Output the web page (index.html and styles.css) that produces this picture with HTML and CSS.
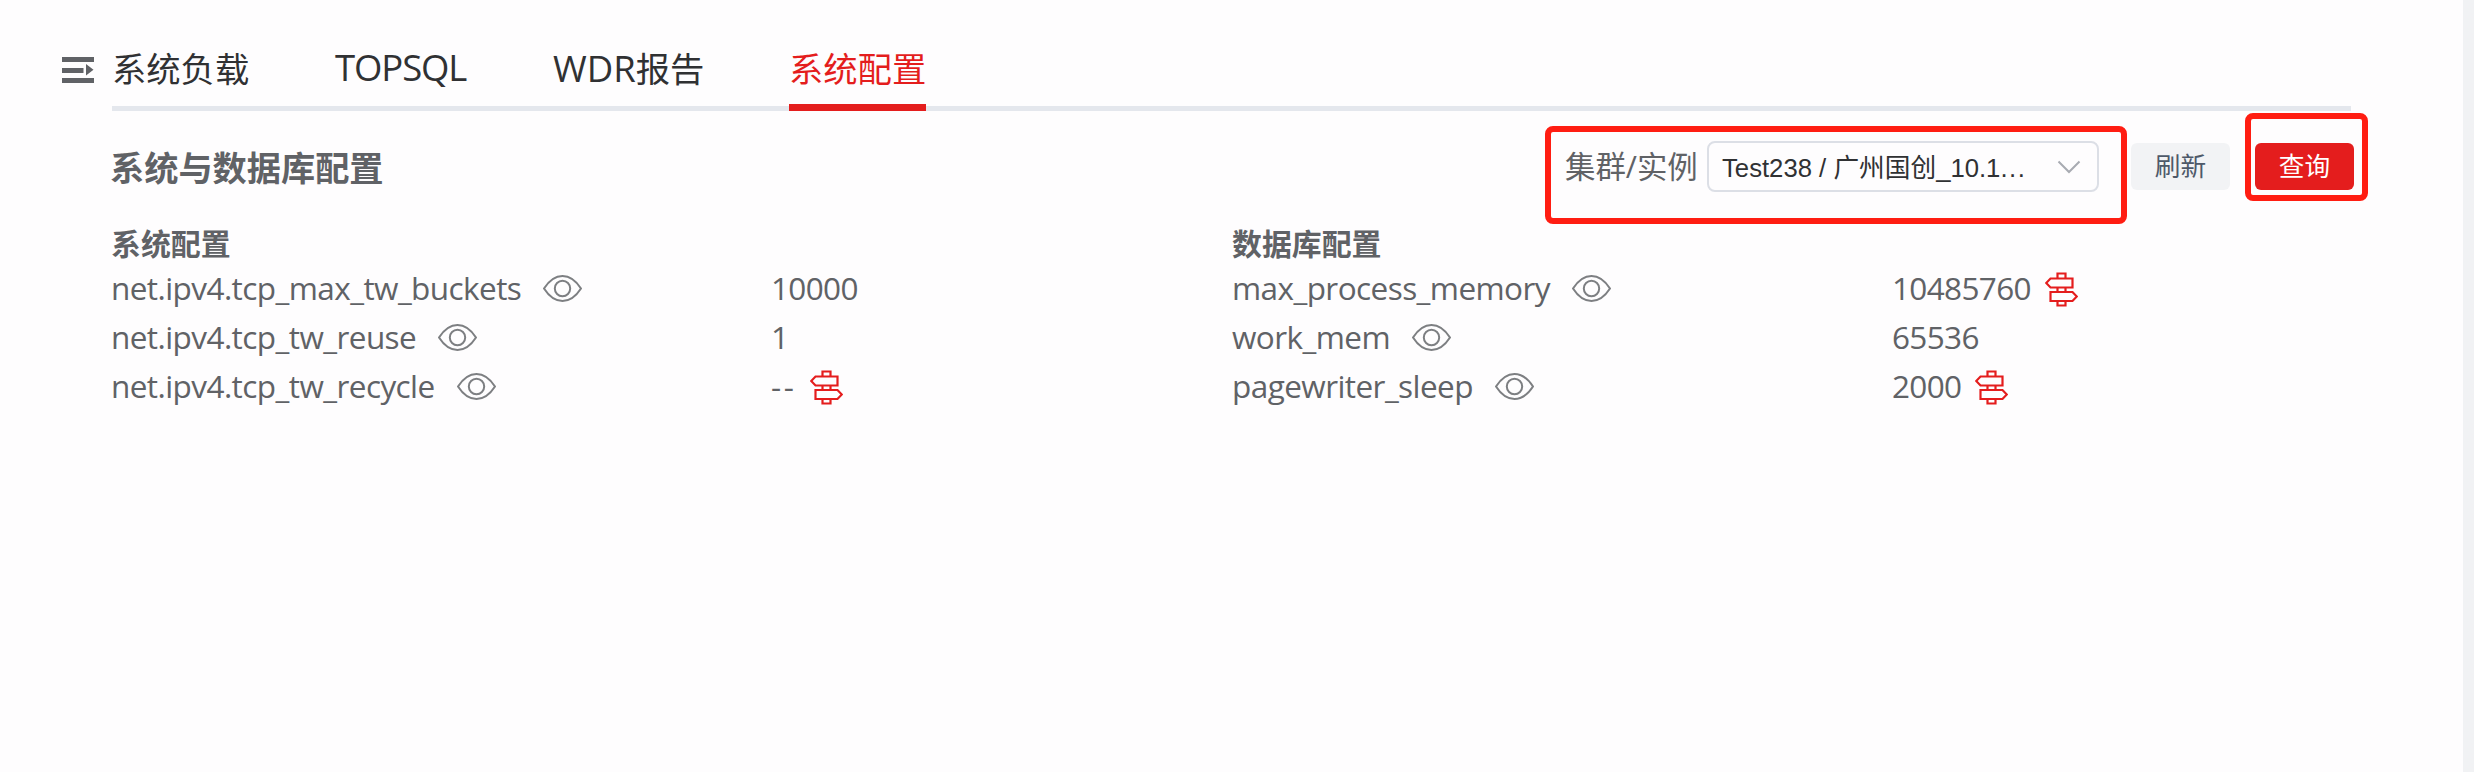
FILE: index.html
```
<!DOCTYPE html>
<html lang="zh-CN">
<head>
<meta charset="utf-8">
<title>系统配置</title>
<link rel="stylesheet" href="styles.css">
</head>
<body>
<svg class="defs" width="0" height="0">
  <symbol id="eye" viewBox="0 0 39 27">
    <path d="M1 13.5C6.500 5 12.500 1 19.500 1S32.500 5 38 13.500C32.500 22 26.500 26 19.500 26S6.500 22 1 13.500Z"/>
    <circle cx="19.500" cy="13.500" r="7.700"/>
  </symbol>
  <symbol id="sign" viewBox="0 0 33 35">
    <path d="M5.500 6.500H27.500V15.500H5.500L1.200 11Z M5.500 20H27.500L31.800 24.500L27.500 29H5.500Z M12.500 6.500V1.500H20.500V6.500 M12.500 15.500V20M20.500 15.500V20 M12.500 29V33.500H20.500V29"/>
  </symbol>
</svg>
<div class="page">
  <header class="header">
    <svg class="menu" viewBox="0 0 32 26"><path d="M0 0H32V5H0ZM0 11H21.500V16H0ZM0 21H32V26H0ZM24 7V18.500L31.500 12.800Z"/></svg>
    <nav class="tabs">
      <a class="tab">系统负载</a>
      <a class="tab tab-top">TOPSQL</a>
      <a class="tab tab-wdr"><span class="latin">WDR</span>报告</a>
      <a class="tab active">系统配置</a>
    </nav>
  </header>
  <main class="content">
    <div class="toolbar">
      <h1 class="title">系统与数据库配置</h1>
      <label class="label">集群/实例</label>
      <div class="select">
        <span class="select-text">Test238 / 广州国创_10.1<span class="dots">...</span></span>
        <svg class="caret" viewBox="0 0 24 14"><path d="M1.500 1.500L12 12L22.500 1.500"/></svg>
      </div>
      <button class="btn btn-plain">刷新</button>
      <button class="btn btn-primary">查询</button>
    </div>
    <div class="columns">
      <section class="group">
        <h2 class="group-title">系统配置</h2>
        <div class="row"><div class="name"><span class="key">net.ipv4.tcp_max_tw_buckets</span><svg class="eye"><use href="#eye"/></svg></div><div class="value">10000</div></div>
        <div class="row"><div class="name"><span class="key">net.ipv4.tcp_tw_reuse</span><svg class="eye"><use href="#eye"/></svg></div><div class="value">1</div></div>
        <div class="row"><div class="name"><span class="key">net.ipv4.tcp_tw_recycle</span><svg class="eye"><use href="#eye"/></svg></div><div class="value"><span class="dash">--</span><svg class="sign"><use href="#sign"/></svg></div></div>
      </section>
      <section class="group">
        <h2 class="group-title">数据库配置</h2>
        <div class="row"><div class="name"><span class="key">max_process_memory</span><svg class="eye"><use href="#eye"/></svg></div><div class="value">10485760<svg class="sign"><use href="#sign"/></svg></div></div>
        <div class="row"><div class="name"><span class="key">work_mem</span><svg class="eye"><use href="#eye"/></svg></div><div class="value">65536</div></div>
        <div class="row"><div class="name"><span class="key">pagewriter_sleep</span><svg class="eye"><use href="#eye"/></svg></div><div class="value">2000<svg class="sign"><use href="#sign"/></svg></div></div>
      </section>
    </div>
  </main>
  <div class="mark mark-select"></div>
  <div class="mark mark-query"></div>
</div>
</body>
</html>
```
FILE: styles.css
```
* { box-sizing: border-box; }
body {
  margin: 0;
  background: #fefdfe;
  color: #606266;
  font-family: "Open Sans", "Noto Sans CJK SC", sans-serif;
}
.defs { position: absolute; }
.page {
  position: relative;
  height: 772px;
  border-right: 11px solid #f1f2f4;
  overflow: hidden;
}
.header {
  display: flex;
  padding-left: 62px;
  height: 111px;
}
.menu { width: 32px; height: 26px; margin-top: 57px; fill: #606266; }
.tabs {
  display: flex;
  width: 2239px;
  margin-left: 18px;
  background: linear-gradient(#e4e7ed, #e4e7ed) 0 106px / 100% 5px no-repeat;
}
.tab {
  width: 137px;
  height: 111px;
  padding-top: 44px;
  margin-right: 85px;
  font-size: 34.300px;
  line-height: 50px;
  white-space: nowrap;
  color: #303133;
}
.tab-top { width: 133px; padding-top: 42px; padding-left: 1px; font-size: 36.500px; letter-spacing: -1.100px; }
.tab-wdr { width: 152px; padding-left: 1px; }
.latin { font-size: 36.500px; line-height: 1; }
.active { color: #e41d1d; border-bottom: 7px solid #e41d1d; margin-right: 0; }
.content { padding-left: 111px; }
.toolbar { display: flex; align-items: center; height: 111px; }
.title { flex: none; width: 1454px; margin: 0; padding-top: 2px; font-size: 34.200px; line-height: 50px; font-weight: 700; text-indent: -1px; }
.label { width: 142px; padding-top: 1px; font-size: 30.400px; line-height: 44px; white-space: nowrap; }
.select {
  display: flex;
  align-items: center;
  width: 392px;
  height: 51px;
  padding: 0 16px 0 13px;
  border: 2px solid #dcdfe6;
  border-radius: 8px;
  font-family: "Liberation Sans", "Noto Sans CJK SC", sans-serif;
  font-size: 25.700px;
  color: #303133;
}
.select-text { flex: 1; padding-bottom: 3px; white-space: nowrap; }
.dots { letter-spacing: 1.500px; }
.caret { width: 24px; height: 14px; fill: none; stroke: #a8abb2; stroke-width: 2; }
.btn {
  width: 99px;
  height: 47px;
  padding: 0 0 3px;
  border: 0;
  border-radius: 6px;
  font: 25.700px/44px "Noto Sans CJK SC", sans-serif;
}
.btn-plain { margin-left: 32px; background: #f2f3f5; color: #4e5969; }
.btn-primary { margin-left: 25px; background: #e41d1d; color: #fff; }
.columns { display: grid; grid-template-columns: 1121px 1120px; }
.group-title { margin: 0; height: 43px; font-size: 29.900px; line-height: 43px; font-weight: 700; }
.row { display: grid; grid-template-columns: 659px 1fr; height: 49px; font-size: 31.500px; line-height: 45px; letter-spacing: -0.650px; }
.name, .value { display: flex; height: 47px; white-space: nowrap; }
.value { padding-left: 1px; }
.key { letter-spacing: -0.570px; }
.dash { letter-spacing: 2.500px; }
.eye { flex: none; width: 39px; height: 27px; margin: 10px 0 0 22px; fill: none; stroke: #7d7f82; stroke-width: 2; }
.sign { flex: none; width: 33px; height: 35px; margin: 7px 0 0 14px; fill: none; stroke: #e41d1d; stroke-width: 2.200; }
.mark { position: absolute; border: 6px solid #ff1d12; border-radius: 8px; }
.mark-select { left: 1545px; top: 126px; width: 582px; height: 98px; }
.mark-query { left: 2245px; top: 113px; width: 123px; height: 88px; }
```
